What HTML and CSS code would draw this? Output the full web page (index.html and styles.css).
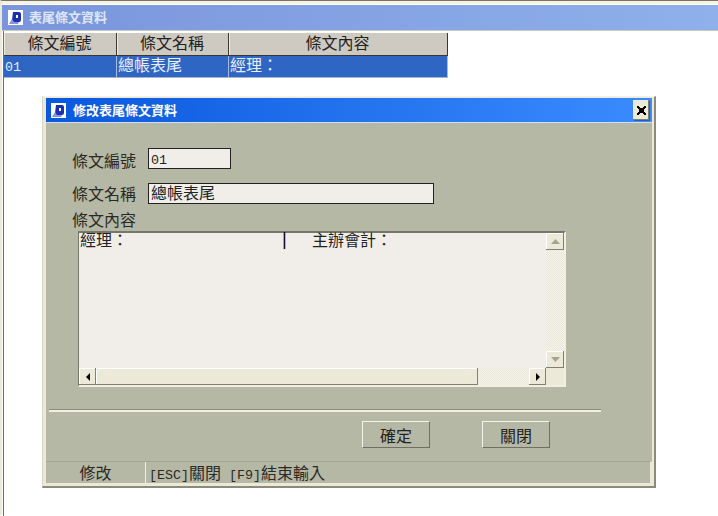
FILE: index.html
```html
<!DOCTYPE html>
<html lang="zh-Hant">
<head>
  <meta charset="UTF-8" />
  <title>表尾條文資料</title>
  <link rel="stylesheet" href="styles.css">
</head>
<body>
  <div class="app">
    <div class="titlebar titlebar-idle">
      <svg class="app-icon" viewBox="0 0 15 15"><rect width="15" height="15" fill="#fff"/><path d="M5 2h6q2 0 2 2v6q0 2-2 2H5l-2 1 1-3z" fill="#1c2fb0"/><path d="M8 5h2v3H8z" fill="#fff"/><path d="M1 14l3-5 2 3 5 0-1 2z" fill="#8595e2"/></svg>
      <span>表尾條文資料</span>
    </div>
    <div class="client">
      <div class="grid">
        <div class="grid-row grid-head">
          <div class="cell">條文編號</div>
          <div class="cell">條文名稱</div>
          <div class="cell">條文內容</div>
        </div>
        <div class="grid-row grid-sel">
          <div class="cell"><span class="latin">01</span></div>
          <div class="cell">總帳表尾</div>
          <div class="cell">經理：</div>
        </div>
      </div>
    </div>
  </div>

  <!-- 修改視窗 -->
  <div class="dialog">
    <div class="titlebar titlebar-active">
      <svg class="app-icon" viewBox="0 0 15 15"><rect width="15" height="15" fill="#fff"/><path d="M5 2h6q2 0 2 2v6q0 2-2 2H5l-2 1 1-3z" fill="#1c2fb0"/><path d="M8 5h2v3H8z" fill="#fff"/><path d="M1 14l3-5 2 3 5 0-1 2z" fill="#8595e2"/></svg>
      <span>修改表尾條文資料</span>
      <button class="close-btn">
        <svg viewBox="0 0 9 9" width="9" height="9"><path d="M0 0h2v1h1v1h3V1h1V0h2v2H8v1H7v3h1v1h1v2H7V8H6V7H3v1H2v1H0V7h1V6h1V3H1V2H0z" fill="#000"/></svg>
      </button>
    </div>
    <div class="dialog-body">
      <div class="form-row">
        <label class="form-label label-code">條文編號</label>
        <div class="field field-code"><span class="latin">01</span></div>
      </div>
      <div class="form-row form-row-name">
        <label class="form-label label-name">條文名稱</label>
        <div class="field field-name">總帳表尾</div>
      </div>
      <div class="form-label memo-label">條文內容</div>
      <div class="memo">
        <div class="memo-text"><span>經理：</span><span class="memo-bar">|</span><span>主辦會計：</span></div>
        <div class="vscroll">
          <div class="sb-btn sb-v"><svg width="9" height="5" viewBox="0 0 9 5"><path d="M4.5 0L9 5H0z" fill="#a3a594"/></svg></div>
          <div class="sb-track"></div>
          <div class="sb-btn sb-v"><svg width="9" height="5" viewBox="0 0 9 5"><path d="M4.5 5L0 0h9z" fill="#a3a594"/></svg></div>
        </div>
        <div class="hscroll">
          <div class="sb-btn sb-h"><svg width="4" height="8" viewBox="0 0 4 8"><path d="M0 4L4 0v8z" fill="#000"/></svg></div>
          <div class="sb-thumb"></div>
          <div class="sb-track"></div>
          <div class="sb-btn sb-h"><svg width="4" height="8" viewBox="0 0 4 8"><path d="M4 4L0 0v8z" fill="#000"/></svg></div>
        </div>
        <div class="sb-corner"></div>
      </div>
      <div class="separator"></div>
      <div class="actions">
        <button class="btn">確定</button>
        <button class="btn">關閉</button>
      </div>
    </div>
    <div class="statusbar">
      <div class="status-mode">修改</div>
      <div class="status-hint"><span class="latin">[ESC]</span>關閉<span class="latin"> [F9]</span>結束輸入</div>
    </div>
  </div>
</body>
</html>
```

FILE: styles.css
```css
html, body {
  margin: 0;
  height: 516px;
  overflow: hidden;
  background: #fff;
}
body {
  font-family: "Noto Sans CJK TC", "Liberation Sans", sans-serif;
  font-size: 16px;
  color: #222;
  position: relative;
}
.latin {
  font-family: "Liberation Mono", monospace;
  font-size: 13.33px;
}

/* main window */
.app {
  height: 515px;
  box-sizing: border-box;
  border-top: 1px solid #7d7362;
  border-left: 2px solid #ece9d8;
  padding-top: 4px;
  box-shadow: inset 0 3px 0 #f5f2e6;
}
.titlebar {
  display: flex;
  align-items: center;
  color: #fff;
  font-size: 13px;
  font-weight: bold;
  line-height: 1;
}
.titlebar span {
  padding-bottom: 2px;
}
.titlebar-idle {
  height: 25px;
  padding-left: 6px;
  gap: 6px;
  color: #dfe6f7;
  background: linear-gradient(to right, #7a95db, #8fb0ea);
  border-bottom: 1px solid #c9c9bd;
}
.app-icon {
  width: 15px;
  height: 15px;
  flex: none;
}
.client {
  margin-left: 1px;
  padding-top: 2px;
  border-left: 1px solid #716f64;
  height: 485px;
  box-sizing: border-box;
}
.grid {
  width: 444px;
}
.grid-row {
  display: grid;
  grid-template-columns: 113px 112px 219px;
  line-height: 1;
}
.grid-head {
  height: 23px;
  background: #cfcac1;
  text-align: center;
  border-bottom: 1px solid #3a372f;
  box-sizing: border-box;
}
.grid-head .cell {
  border-right: 1px solid #3a372f;
  border-left: 1px solid #efece4;
  padding: 1px 2px 0 0;
}
.grid-sel {
  height: 22px;
  background: #2f66c4;
  color: #e8eefa;
  border-bottom: 1px solid #a9b4c8;
  box-sizing: border-box;
}
.grid-sel .cell {
  border-right: 1px solid #a9b9dc;
  padding: 0 0 0 1px;
}

/* dialog */
.dialog {
  position: absolute;
  left: 42px;
  top: 96px;
  width: 614px;
  height: 392px;
  box-sizing: border-box;
  padding: 1px 2px 3px 3px;
  background: #ece9d8;
  border-right: 2px solid #8b8a7c;
  border-bottom: 2px solid #8b8a7c;
  border-left: 1px solid #d8d6c6;
  border-top: 1px solid #f4f2e8;
  display: flex;
  flex-direction: column;
}
.titlebar-active {
  height: 25px;
  flex: none;
  padding: 0 3px 0 5px;
  gap: 7px;
  background: linear-gradient(to right, #0a58dd, #3b8bff);
  border-bottom: 1px solid #cfe0f5;
  box-sizing: border-box;
}
.close-btn {
  margin-left: auto;
  width: 16px;
  height: 20px;
  padding: 0;
  background: #ece9d8;
  border: 0;
  box-shadow: inset -1px -1px 0 #807f70, 1px 1px 0 #2e5fa8;
  display: flex;
  align-items: center;
  justify-content: center;
}
.dialog-body {
  flex: 1;
  background: #b6b8a6;
  padding: 25px 0 0 3px;
}
.form-row {
  display: flex;
  padding-left: 23px;
  gap: 14px;
}
.form-row-name {
  margin-top: 14px;
}
.form-label {
  color: #2a2a24;
  height: 21px;
  line-height: 21px;
  width: 62px;
  white-space: nowrap;
}
.label-code {
  line-height: 25px;
}
.label-name {
  line-height: 20px;
}
.field {
  height: 21px;
  box-sizing: border-box;
  border: 1px solid #222;
  background: #f1eeea;
  line-height: 17px;
  padding-left: 2px;
  white-space: nowrap;
}
.field-code {
  width: 83px;
}
.field-name {
  width: 286px;
}
.memo-label {
  margin: 4px 0 0 23px;
  line-height: 22px;
}
.memo {
  margin: 2px 0 0 29px;
  width: 488px;
  height: 156px;
  box-sizing: border-box;
  display: grid;
  grid-template-columns: 1fr 18px;
  grid-template-rows: 1fr 17px;
  border-top: 2px solid #77766a;
  border-left: 1px solid #77766a;
  border-right: 2px solid #f1efe4;
  border-bottom: 2px solid #f1efe4;
}
.memo-text {
  background: #f1eeea;
  padding-left: 1px;
  line-height: 12px;
  display: flex;
  white-space: nowrap;
}
.memo-bar {
  margin: 0 30px 0 151px;
  font-family: "Liberation Mono", monospace;
  font-size: 18px;
  line-height: 15px;
  width: 3px;
  color: #000;
}
.vscroll {
  display: flex;
  flex-direction: column;
}
.hscroll {
  display: flex;
}
.sb-track {
  flex: 1;
  background: repeating-conic-gradient(#f6f4ea 0 25%, #e9e7da 0 50%) 0 0 / 2px 2px;
}
.sb-btn {
  flex: none;
  background: #ece9d8;
  box-shadow: inset -1px -1px 0 #807f70, inset 1px 1px 0 #fff;
  display: flex;
  align-items: center;
  justify-content: center;
}
.sb-v {
  height: 17px;
}
.sb-h {
  width: 17px;
}
.sb-thumb {
  width: 382px;
  background: #ece9d8;
  box-shadow: inset -1px -1px 0 #807f70, inset 1px 1px 0 #fff;
}
.sb-corner {
  background: #ece9d8;
}
.separator {
  margin: 22px 0 0 0;
  width: 552px;
  height: 1px;
  background: #8d8e7e;
  border-bottom: 2px solid #f1efe4;
}
.actions {
  display: flex;
  gap: 52px;
  margin: 9px 0 0 313px;
}
.btn {
  width: 68px;
  height: 27px;
  padding: 0;
  font: inherit;
  color: #222;
  line-height: 1;
  background: #b6b8a6;
  border: 1px solid;
  border-color: #f4f2e8 #6f7062 #6f7062 #f4f2e8;
}
.statusbar {
  flex: none;
  height: 22px;
  display: flex;
  background: #b6b8a6;
  border-top: 1px solid #a3a594;
  border-right: 2px solid #ece9d8;
  box-sizing: border-box;
  line-height: 20px;
  color: #2a2a24;
}
.status-mode {
  width: 99px;
  text-align: center;
  border-right: 1px solid #f1efe4;
}
.status-hint {
  padding-left: 3px;
  white-space: pre;
}
```
